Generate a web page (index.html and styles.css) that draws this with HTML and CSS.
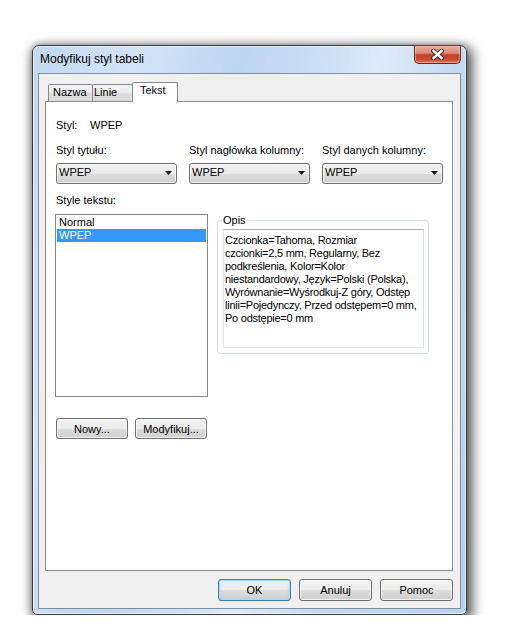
FILE: index.html
```html
<!DOCTYPE html>
<html lang="pl">
<head>
<meta charset="utf-8">
<title>Modyfikuj styl tabeli</title>
<link rel="stylesheet" href="styles.css">
</head>
<body>
<div class="window">
  <div class="titlebar">
    <span class="title">Modyfikuj styl tabeli</span>
    <div class="close">
      <svg width="13" height="11" viewBox="0 0 13 11">
        <path d="M2.5 2 L10.5 9 M10.5 2 L2.5 9" stroke="#3a3a3a" stroke-width="4.6" stroke-linecap="square" fill="none"/>
        <path d="M2.5 2 L10.5 9 M10.5 2 L2.5 9" stroke="#ffffff" stroke-width="2.4" stroke-linecap="square" fill="none"/>
      </svg>
    </div>
  </div>
  <div class="client">
    <div class="tabs">
      <div class="tab tab-nazwa">Nazwa</div>
      <div class="tab tab-linie">Linie</div>
      <div class="tab tab-tekst active">Tekst</div>
    </div>
    <div class="panel">
      <div class="style-row"><span class="style-label">Styl:</span><span>WPEP</span></div>
      <div class="combos">
        <div class="combo-col">
          <div class="label">Styl tytułu:</div>
          <div class="combo"><span>WPEP</span><svg class="arrow" width="7" height="4" viewBox="0 0 7 4"><polygon points="0,0 7,0 3.5,4" fill="#1a1a1a"/></svg></div>
        </div>
        <div class="combo-col">
          <div class="label">Styl nagłówka kolumny:</div>
          <div class="combo"><span>WPEP</span><svg class="arrow" width="7" height="4" viewBox="0 0 7 4"><polygon points="0,0 7,0 3.5,4" fill="#1a1a1a"/></svg></div>
        </div>
        <div class="combo-col">
          <div class="label">Styl danych kolumny:</div>
          <div class="combo"><span>WPEP</span><svg class="arrow" width="7" height="4" viewBox="0 0 7 4"><polygon points="0,0 7,0 3.5,4" fill="#1a1a1a"/></svg></div>
        </div>
      </div>
      <div class="label list-label">Style tekstu:</div>
      <div class="list-row">
        <div class="listbox">
          <div class="item">Normal</div>
          <div class="item selected">WPEP</div>
        </div>
        <fieldset class="group">
          <legend>Opis</legend>
          <div class="desc">Czcionka=Tahoma, Rozmiar<br>czcionki=2,5 mm, Regularny, Bez<br>podkreślenia, Kolor=Kolor<br>niestandardowy, Język=Polski (Polska),<br>Wyrównanie=Wyśrodkuj-Z góry, Odstęp<br>linii=Pojedynczy, Przed odstępem=0 mm,<br>Po odstępie=0 mm</div>
        </fieldset>
      </div>
      <div class="btn-row">
        <button class="btn small">Nowy...</button>
        <button class="btn small">Modyfikuj...</button>
      </div>
    </div>
    <div class="footer">
      <button class="btn default">OK</button>
      <button class="btn">Anuluj</button>
      <button class="btn">Pomoc</button>
    </div>
  </div>
</div>
</body>
</html>
```
FILE: styles.css
```css
* { box-sizing: border-box; }

html, body { background: #ffffff; }

body {
  margin: 0;
  padding: 45px 0 0 32px;
  font-family: "Liberation Sans", Arial, sans-serif;
  font-size: 11px;
  line-height: 13px;
  color: #000;
}

.window {
  width: 435px;
  height: 570px;
  border: 1px solid #383c42;
  border-radius: 7px 7px 5px 5px;
  padding: 0 5px 5px 5px;
  display: flex;
  flex-direction: column;
  background: linear-gradient(105deg, #c2d8f0 0%, #d3e4f7 18%, #bdd5ef 36%, #cde0f5 52%, #deebf9 60%, #c3d9f1 74%, #b9d2ee 100%);
  box-shadow: 3px 4px 12px 3px rgba(0, 0, 0, 0.6), 0 0 6px rgba(0, 0, 0, 0.25), inset 0 0 0 1px rgba(255, 255, 255, 0.55);
}

.titlebar {
  height: 27px;
  display: flex;
  align-items: flex-start;
}

.title {
  font-size: 12px;
  line-height: 15px;
  margin: 6px 0 0 2px;
  color: #000;
}

.close {
  margin-left: auto;
  margin-top: -1px;
  width: 47px;
  height: 19px;
  border: 1px solid #5a2a22;
  border-top-color: #6b3a32;
  border-radius: 0 0 5px 5px;
  background: linear-gradient(180deg, #eaa99b 0%, #dd8a78 42%, #c23f27 52%, #c94a2f 78%, #e0754f 100%);
  box-shadow: inset 0 0 0 1px rgba(255, 220, 210, 0.45);
  display: flex;
  align-items: center;
  justify-content: center;
}

.close svg { display: block; }

.client {
  height: 536px;
  border: 1px solid #8090a1;
  background: #f0f0f0;
  padding: 8px 7px 0 6px;
  display: flex;
  flex-direction: column;
}

.tabs {
  height: 19px;
  display: flex;
  align-items: flex-end;
  padding-left: 3px;
  position: relative;
  z-index: 1;
}

.tab {
  height: 17px;
  border: 1px solid #898c95;
  border-bottom: none;
  border-radius: 2px 2px 0 0;
  background: linear-gradient(180deg, #f3f3f3 0%, #ebebeb 45%, #dedede 55%, #d9d9d9 100%);
  padding-top: 1px;
  white-space: nowrap;
}

.tab-nazwa { width: 45px; padding-left: 4px; }
.tab-linie { width: 41px; margin-left: -1px; padding-left: 1px; }
.tab-tekst { width: 46px; margin-left: -1px; padding-left: 7px; }

.tab.active {
  height: 20px;
  margin-bottom: -1px;
  background: #ffffff;
  color: #0a0a20;
}

.panel {
  height: 470px;
  border: 1px solid #898c95;
  background: #ffffff;
  padding: 17px 0 0 10px;
}

.style-row {
  display: flex;
  height: 13px;
}

.style-label { width: 34px; }

.combos {
  display: grid;
  grid-template-columns: repeat(3, 121px);
  column-gap: 12px;
  margin-top: 12px;
}

.label {
  height: 13px;
  white-space: nowrap;
}

.combo {
  margin-top: 6px;
  height: 21px;
  border: 1px solid #707070;
  border-radius: 3px;
  background: linear-gradient(180deg, #f2f2f2 0%, #ebebeb 50%, #dddddd 50%, #cfcfcf 100%);
  box-shadow: inset 0 0 0 1px rgba(255, 255, 255, 0.6);
  display: flex;
  align-items: flex-start;
  padding: 2px 0 0 2px;
}

.arrow {
  display: block;
  margin-left: auto;
  margin-right: 4px;
  margin-top: 5px;
}

.list-label { margin-top: 10px; }

.list-row {
  display: flex;
  align-items: flex-start;
  margin-top: 7px;
}

.listbox {
  width: 153px;
  height: 183px;
  margin-left: -1px;
  border: 1px solid #828790;
  background: #ffffff;
  padding: 1px;
}

.item {
  height: 13px;
  padding-left: 2px;
  white-space: nowrap;
}

.item.selected {
  background: #3399ff;
  color: #ffffff;
}

.group {
  margin: 0 0 0 9px;
  width: 212px;
  min-width: 0;
  border: 1px solid #d5dfe5;
  border-radius: 3px;
  padding: 2px 4px 5px 4px;
}

.group legend {
  padding: 0 1px;
  line-height: 13px;
}

.desc {
  width: 201px;
  height: 119px;
  margin-left: 1px;
  border: 1px solid;
  border-color: #abadb3 #dbdfe6 #e3e9ef #e2e3ea;
  background: #ffffff;
  padding: 4px 0 0 1px;
  white-space: nowrap;
  letter-spacing: -0.25px;
}

.btn-row {
  display: flex;
  gap: 7px;
  margin-top: 21px;
}

.btn {
  font-family: inherit;
  font-size: 11px;
  line-height: 13px;
  color: #000;
  width: 73px;
  height: 22px;
  padding: 0;
  border: 1px solid #707070;
  border-radius: 3px;
  background: linear-gradient(180deg, #f2f2f2 0%, #ebebeb 50%, #dddddd 50%, #cfcfcf 100%);
  box-shadow: inset 0 0 0 1px rgba(255, 255, 255, 0.7);
}

.btn.small {
  width: 72px;
  height: 21px;
  padding-top: 2px;
}

.btn.default {
  border-color: #3c7fb1;
  box-shadow: inset 0 0 0 1px #a9d9f5, inset 0 0 3px 1px rgba(150, 205, 240, 0.55);
}

.footer {
  display: flex;
  justify-content: flex-end;
  gap: 8px;
  margin-top: 8px;
}
```
